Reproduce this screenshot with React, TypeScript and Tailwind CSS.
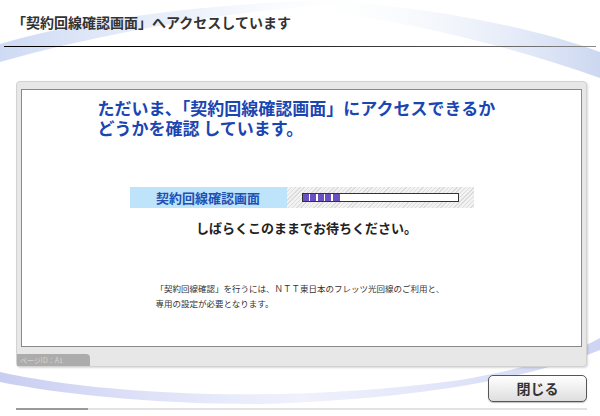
import React from 'react';

const font = { fontFamily: '"Noto Sans CJK JP", "Noto Sans", sans-serif' };

function Backdrop() {
  return (
    <svg className="absolute inset-0 pointer-events-none" width="600" height="416" viewBox="0 0 600 416">
      <defs>
        <linearGradient id="topBand" x1="0" y1="0" x2="1" y2="0">
          <stop offset="0" stopColor="#c9d6f2" stopOpacity="0.9" />
          <stop offset="0.5" stopColor="#dfe8f8" stopOpacity="0.6" />
          <stop offset="1" stopColor="#ffffff" stopOpacity="0" />
        </linearGradient>
        <linearGradient id="topRight" x1="0" y1="0" x2="1" y2="0">
          <stop offset="0" stopColor="#ffffff" stopOpacity="0" />
          <stop offset="1" stopColor="#c6d3ef" stopOpacity="0.9" />
        </linearGradient>
        <linearGradient id="bottomBand" x1="0" y1="0" x2="1" y2="0">
          <stop offset="0" stopColor="#c3c8f0" stopOpacity="0.9" />
          <stop offset="0.5" stopColor="#e4e8fa" stopOpacity="0.6" />
          <stop offset="1" stopColor="#c9cff2" stopOpacity="0.9" />
        </linearGradient>
      </defs>
      <path d="M0 44 C 80 20, 200 4, 330 0 L 380 0 C 240 10, 120 28, 0 62 Z" fill="url(#topBand)" />
      <path d="M330 0 C 450 10, 540 30, 600 52 L 600 78 C 520 50, 420 22, 300 8 Z" fill="url(#topRight)" />
      <path d="M0 372 C 120 398, 300 402, 460 380 C 520 370, 570 355, 600 338 L 600 350 C 520 382, 400 400, 260 404 C 150 404, 60 394, 0 382 Z" fill="url(#bottomBand)" />
    </svg>
  );
}

export default function App() {
  return (
    <div className="relative w-[600px] h-[416px] overflow-hidden bg-white" style={font}>
      <Backdrop />
      <div className="relative">
        <div className="h-[46px] pl-[12px] pt-[13px]">
          <h1 className="text-[14px] leading-[18px] font-bold text-[#333]">「契約回線確認画面」へアクセスしています</h1>
        </div>
        <div className="mx-[4px] h-px bg-gradient-to-r from-black via-[#222] to-[#8a8a8a]" />

        <div className="ml-[16px] mt-[34px] w-[571px] rounded-[4px] border border-[#d2d2d2] bg-[#e7e7e7] shadow-[1px_1px_2px_rgba(0,0,0,0.15)]">
          <div className="px-[4px] pt-[7px]">
            <div className="h-[258px] border border-[#8a8a8a] bg-white flex flex-col items-center pt-[8px]">
              <p className="w-[408px] text-[17px] leading-[20px] font-bold text-[#1b46b2]">
                ただいま、「契約回線確認画面」にアクセスできるか
                <br />
                どうかを確認 しています。
              </p>

              <div className="mt-[49px] flex h-[21px]">
                <div className="w-[157px] bg-[#bde4fa] flex items-center justify-center text-[13px] font-bold text-[#2150b4]">
                  契約回線確認画面
                </div>
                <div className="w-[187px] flex items-center pl-[15px] bg-[repeating-linear-gradient(135deg,#dcdcdc_0px,#dcdcdc_1px,#f2f2f2_1px,#f2f2f2_3px)]">
                  <div className="w-[157px] h-[9px] border border-[#333] bg-white flex gap-[1.5px]">
                    <div className="w-[6px] bg-[#6a50c0]" />
                    <div className="w-[6px] bg-[#6a50c0]" />
                    <div className="w-[6px] bg-[#6a50c0]" />
                    <div className="w-[6px] bg-[#6a50c0]" />
                    <div className="w-[7px] bg-[#6a50c0]" />
                  </div>
                </div>
              </div>

              <p className="mt-[12px] pl-[10px] text-[13px] leading-[16px] font-bold text-[#222]">しばらくこのままでお待ちください。</p>

              <p className="mt-[45px] w-[292px] text-[8.5px] leading-[15px] text-[#333]">
                「契約回線確認」を行うには、ＮＴＴ東日本のフレッツ光回線のご利用と、
                <br />
                専用の設定が必要となります。
              </p>
            </div>
          </div>
          <div className="mt-[7px] flex">
            <div className="w-[73px] h-[12px] rounded-tr-[4px] bg-[#acacac] px-[3px] text-[7px] leading-[12px] text-[#d4d4d4]">
              ページID：A1
            </div>
          </div>
        </div>

        <div className="mt-[8px] ml-[16px] w-[571px] flex justify-end">
          <button className="w-[99px] h-[27px] rounded-[5px] border border-[#555] bg-gradient-to-b from-white to-[#dedede] shadow-[0_1px_1px_rgba(0,0,0,0.25)] text-[14px] font-bold text-[#333]">
            閉じる
          </button>
        </div>

        <div className="mt-[6px] ml-[16px] w-[571px] h-[2px] flex bg-[#e2e2e2]">
          <div className="w-[72px] bg-[#9a9a9a]" />
        </div>
      </div>
    </div>
  );
}
